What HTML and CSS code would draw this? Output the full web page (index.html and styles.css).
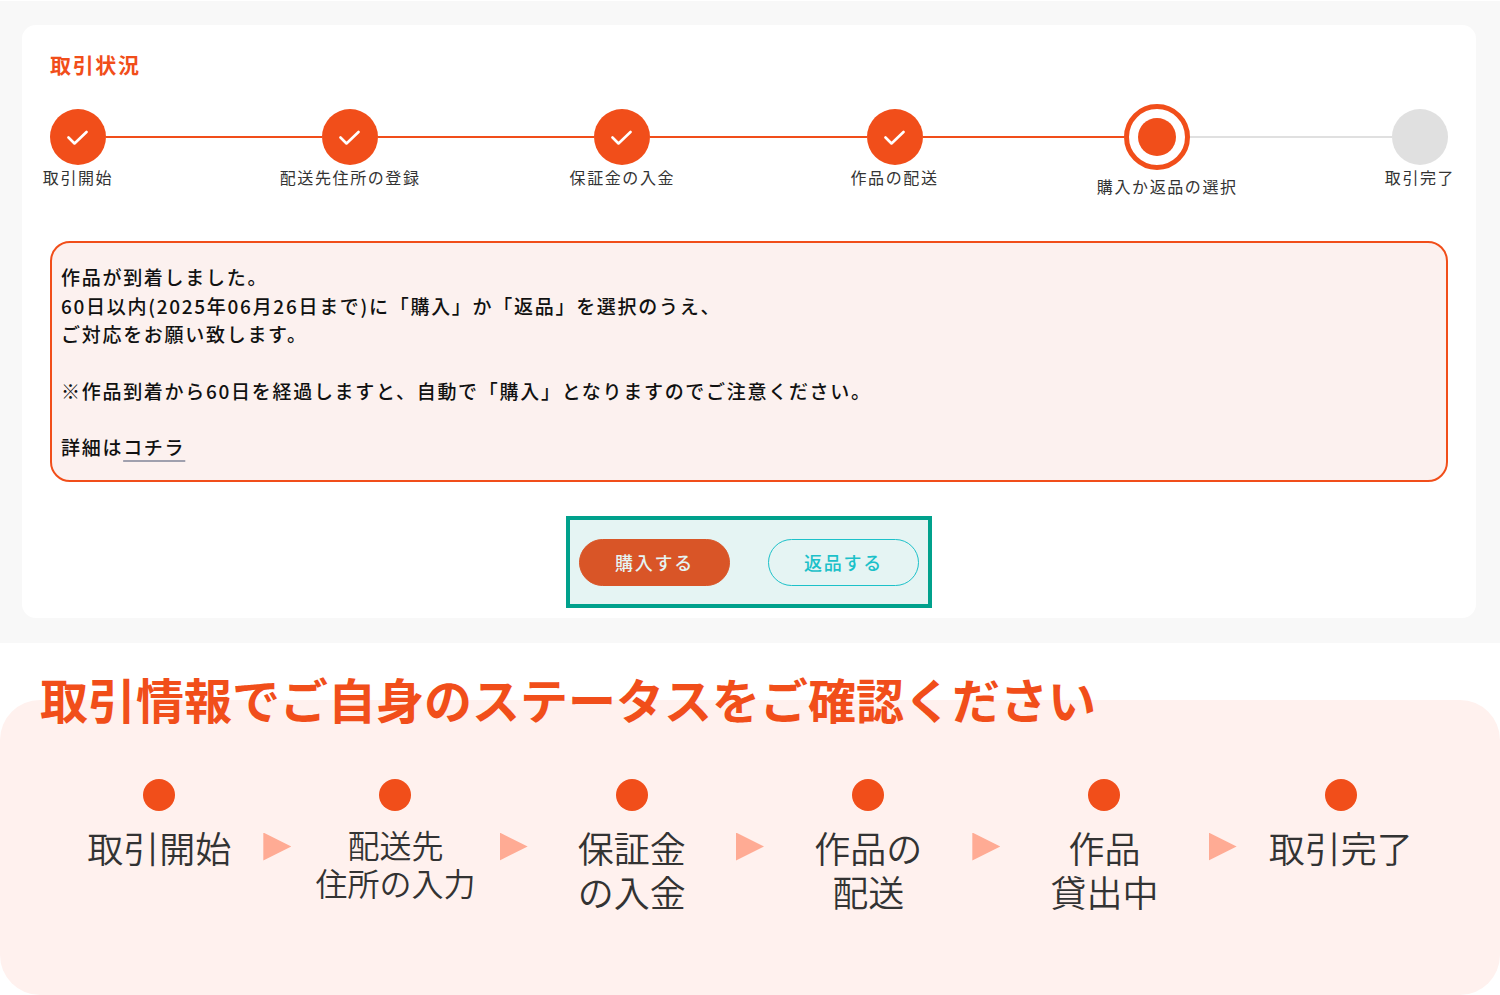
FILE: index.html
```html
<!DOCTYPE html>
<html lang="ja">
<head>
    <meta charset="UTF-8">
    <meta name="viewport" content="width=device-width, initial-scale=1.0">
    <title>取引状況</title>
    <link rel="stylesheet" href="styles.css">
</head>
<body>
    <section class="status">
        <div class="card">
            <h2 class="card-title">取引状況</h2>

            <!-- Progress -->
            <div class="progress">
                <div class="step">
                    <span class="step-circle"><svg class="check" viewBox="0 0 22 16"><path d="M1.5 8.5 L7.5 14.5 L19.5 3"/></svg></span>
                    <span class="step-label">取引開始</span>
                </div>
                <div class="line"></div>
                <div class="step">
                    <span class="step-circle"><svg class="check" viewBox="0 0 22 16"><path d="M1.5 8.5 L7.5 14.5 L19.5 3"/></svg></span>
                    <span class="step-label">配送先住所の登録</span>
                </div>
                <div class="line"></div>
                <div class="step">
                    <span class="step-circle"><svg class="check" viewBox="0 0 22 16"><path d="M1.5 8.5 L7.5 14.5 L19.5 3"/></svg></span>
                    <span class="step-label">保証金の入金</span>
                </div>
                <div class="line"></div>
                <div class="step">
                    <span class="step-circle"><svg class="check" viewBox="0 0 22 16"><path d="M1.5 8.5 L7.5 14.5 L19.5 3"/></svg></span>
                    <span class="step-label">作品の配送</span>
                </div>
                <div class="line line-short"></div>
                <div class="step current">
                    <span class="step-circle"></span>
                    <span class="step-label">購入か返品の選択</span>
                </div>
                <div class="line line-short line-todo"></div>
                <div class="step todo">
                    <span class="step-circle"></span>
                    <span class="step-label">取引完了</span>
                </div>
            </div>

            <!-- Message -->
            <div class="notice">
                <p>作品が到着しました。<br>60日以内(2025年06月26日まで)に「購入」か「返品」を選択のうえ、<br>ご対応をお願い致します。</p>
                <p>※作品到着から60日を経過しますと、自動で「購入」となりますのでご注意ください。</p>
                <p>詳細は<a href="#">コチラ</a></p>
            </div>

            <div class="actions">
                <button type="button" class="btn btn-buy">購入する</button>
                <button type="button" class="btn btn-return">返品する</button>
            </div>
        </div>
    </section>

    <section class="guide">
        <h1 class="guide-title">取引情報でご自身のステータスをご確認ください</h1>
        <div class="flow">
            <div class="flow-item"><span class="dot"></span><p>取引開始</p></div>
            <span class="arrow"></span>
            <div class="flow-item"><span class="dot"></span><p class="small">配送先<br>住所の入力</p></div>
            <span class="arrow"></span>
            <div class="flow-item"><span class="dot"></span><p>保証金<br>の入金</p></div>
            <span class="arrow"></span>
            <div class="flow-item"><span class="dot"></span><p>作品の<br>配送</p></div>
            <span class="arrow"></span>
            <div class="flow-item"><span class="dot"></span><p>作品<br>貸出中</p></div>
            <span class="arrow"></span>
            <div class="flow-item"><span class="dot"></span><p>取引完了</p></div>
        </div>
    </section>
</body>
</html>
```

FILE: styles.css
```css
/* General Styles */
* {
    box-sizing: border-box;
}

body {
    margin: 0;
    font-family: "Noto Sans CJK JP", sans-serif;
    background-color: #fff;
    color: #333;
}

h1, h2, p {
    margin: 0;
}

/* Status card */
.status {
    margin-top: 1px;
    padding: 24px 24px 25px 22px;
    background-color: #f8f8f8;
}

.card {
    padding: 24px 28px 10px;
    background-color: #fff;
    border-radius: 14px;
}

.card-title {
    font-size: 21px;
    line-height: 30px;
    letter-spacing: 0.08em;
    color: #f14e1a;
}

/* Progress */
.progress {
    display: flex;
    align-items: flex-start;
    margin-top: 25px;
}

.step {
    display: flex;
    flex-direction: column;
    align-items: center;
    flex: none;
    width: 56px;
    padding-top: 5px;
}

.step-circle {
    display: flex;
    justify-content: center;
    align-items: center;
    width: 56px;
    height: 56px;
    background-color: #f14e1a;
    border-radius: 50%;
}

.check {
    width: 22px;
    height: 16px;
    fill: none;
    stroke: #fff;
    stroke-width: 2.6;
    stroke-linecap: round;
    stroke-linejoin: round;
}

.step-label {
    font-size: 16px;
    line-height: 24px;
    letter-spacing: 0.1em;
    white-space: nowrap;
}

.current {
    width: 66px;
    padding-top: 0;
}

.current .step-circle {
    width: 66px;
    height: 66px;
    border: 5px solid #f14e1a;
    background-color: #fff;
}

.current .step-circle::before {
    content: "";
    width: 38px;
    height: 38px;
    background-color: #f14e1a;
    border-radius: 50%;
}

.current .step-label {
    padding: 4px 0 0 20px;
}

.todo .step-circle {
    background-color: #e0e0e0;
}

.line {
    flex: 15;
    height: 2px;
    margin-top: 32px;
    background-color: #f14e1a;
}

.line-short {
    flex: 14;
}

.line-todo {
    background-color: #e0e0e0;
}

/* Message */
.notice {
    margin-top: 43px;
    padding: 20px 9px 18px;
    border: 2px solid #f14e1a;
    border-radius: 20px;
    background-color: #fcf1ef;
    color: #111;
    font-size: 19px;
    font-weight: 500;
    line-height: 1.5;
    letter-spacing: 0.09em;
}

.notice p + p {
    margin-top: 28px;
}

.notice a {
    color: inherit;
    text-decoration: underline 2px #a0a0ae;
    text-decoration-skip-ink: none;
    text-underline-offset: 5px;
}

/* Buttons */
.actions {
    display: flex;
    gap: 38px;
    width: fit-content;
    margin: 34px auto 0;
    padding: 19px 9px 18px;
    border: 4px solid #00a18c;
    background-color: #e5f4f3;
}

.btn {
    width: 151px;
    height: 47px;
    padding: 0;
    border: 1px solid #1cc1c9;
    border-radius: 24px;
    background: none;
    color: #1cc1c9;
    font-family: inherit;
    font-size: 18px;
    font-weight: 500;
    letter-spacing: 0.1em;
    cursor: pointer;
}

.btn-buy {
    border-color: #d95527;
    background-color: #d95527;
    color: #e5f4f3;
}

/* Guide */
.guide {
    display: flex;
    flex-direction: column;
    margin-top: 57px;
    padding-bottom: 82px;
    border-radius: 40px;
    background-color: #fff1ee;
}

/* heading overlaps the top edge of the panel */
.guide-title {
    margin-top: -38px;
    padding: 0 40px;
    font-size: 48px;
    line-height: 72px;
    color: #f14e1a;
}

.flow {
    display: flex;
    align-items: flex-start;
    margin-top: 45px;
    padding: 0 55px;
}

.flow-item {
    display: flex;
    flex: 1;
    flex-direction: column;
    align-items: center;
    gap: 14px;
    font-size: 36px;
    font-weight: 350;
    line-height: 44px;
    text-align: center;
    white-space: nowrap;
}

.flow-item .small {
    font-size: 32px;
    line-height: 38px;
}

.dot {
    width: 32px;
    height: 32px;
    background-color: #f14e1a;
    border-radius: 50%;
}

.arrow {
    width: 28px;
    height: 28px;
    margin-top: 54px;
    background-color: #ffab94;
    clip-path: polygon(0 0, 100% 50%, 0 100%);
}
```
